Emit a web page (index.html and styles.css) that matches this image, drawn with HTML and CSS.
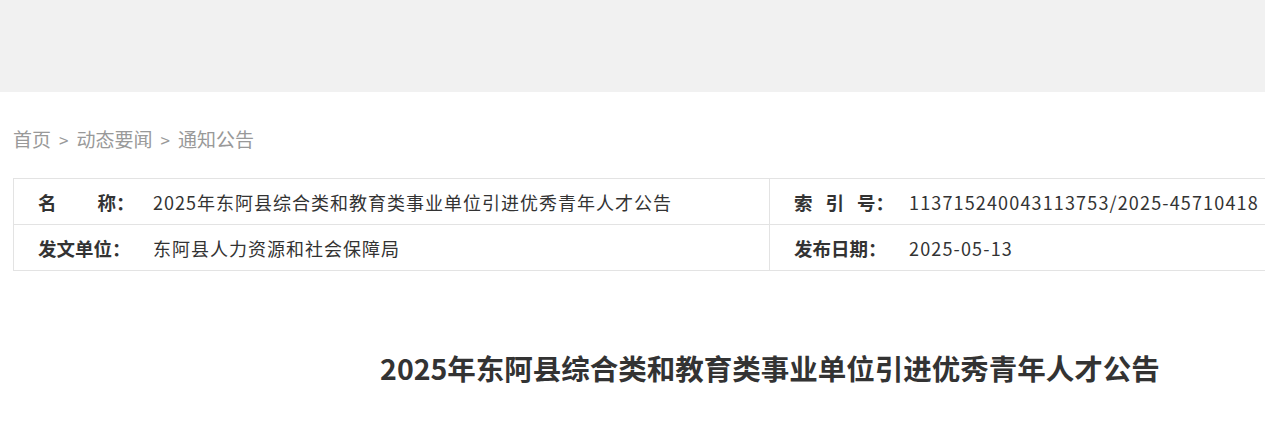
FILE: index.html
```html
<!DOCTYPE html>
<html lang="zh-CN">
<head>
  <meta charset="UTF-8">
  <title>2025年东阿县综合类和教育类事业单位引进优秀青年人才公告</title>
  <link rel="stylesheet" href="styles.css">
</head>
<body>

  <!-- Top Bar -->
  <div class="topbar"></div>

  <div class="page">
    <!-- Breadcrumb -->
    <div class="crumbs">
      <a href="#">首页</a><span class="sep">&gt;</span><a href="#">动态要闻</a><span class="sep">&gt;</span><a href="#">通知公告</a>
    </div>

    <!-- Info Table -->
    <div class="info">
      <div class="info-row">
        <div class="cell">
          <span class="label">名<span class="gap"></span>称：</span>
          <span class="value">2025年东阿县综合类和教育类事业单位引进优秀青年人才公告</span>
        </div>
        <div class="cell">
          <span class="label"><span class="spaced">索引</span>号：</span>
          <span class="value num">113715240043113753/2025-45710418</span>
        </div>
      </div>
      <div class="info-row">
        <div class="cell">
          <span class="label">发文单位：</span>
          <span class="value">东阿县人力资源和社会保障局</span>
        </div>
        <div class="cell">
          <span class="label">发布日期：</span>
          <span class="value num">2025-05-13</span>
        </div>
      </div>
    </div>

    <h1 class="title">2025年东阿县综合类和教育类事业单位引进优秀青年人才公告</h1>
  </div>

</body>
</html>
```

FILE: styles.css
```css
* {
  box-sizing: border-box;
}

html, body {
  overflow-x: hidden;
}

body {
  margin: 0;
  font-family: "Noto Sans CJK SC", "Noto Sans", sans-serif;
  color: #333;
  background-color: white;
}

/* Top Bar */
.topbar {
  height: 92px;
  background-color: #f1f1f1;
}

.page {
  width: 1514px;
  margin-left: 13px;
}

/* Breadcrumb */
.crumbs {
  padding-top: 34px;
  height: 86px;
  font-size: 19px;
  line-height: 26px;
  color: #999;
}

.crumbs a {
  color: #999;
  text-decoration: none;
}

.crumbs .sep {
  margin: 0 8px;
  font-size: 17px;
}

/* Info Table */
.info {
  border: 1px solid #e3e3e3;
}

.info-row {
  display: flex;
}

.info-row + .info-row {
  border-top: 1px solid #e3e3e3;
}

.cell {
  flex: 0 0 755px;
  height: 45px;
  display: flex;
  align-items: center;
  padding-left: 24px;
  font-size: 18px;
}

.cell + .cell {
  flex: 1;
  border-left: 1px solid #e3e3e3;
}

.label {
  width: 115px;
  font-size: 18.5px;
  font-weight: bold;
  color: #333;
  flex-shrink: 0;
}

.label .gap {
  display: inline-block;
  width: 41px;
}

.label .spaced {
  letter-spacing: 13px;
}

.value {
  font-size: 18px;
  letter-spacing: 1px;
  white-space: nowrap;
}

.value.num {
  letter-spacing: 1.15px;
}

/* Article Title */
.title {
  margin: 75px 0 0;
  text-align: center;
  font-size: 28.5px;
  line-height: 44px;
  font-weight: bold;
  color: #333;
}
```
